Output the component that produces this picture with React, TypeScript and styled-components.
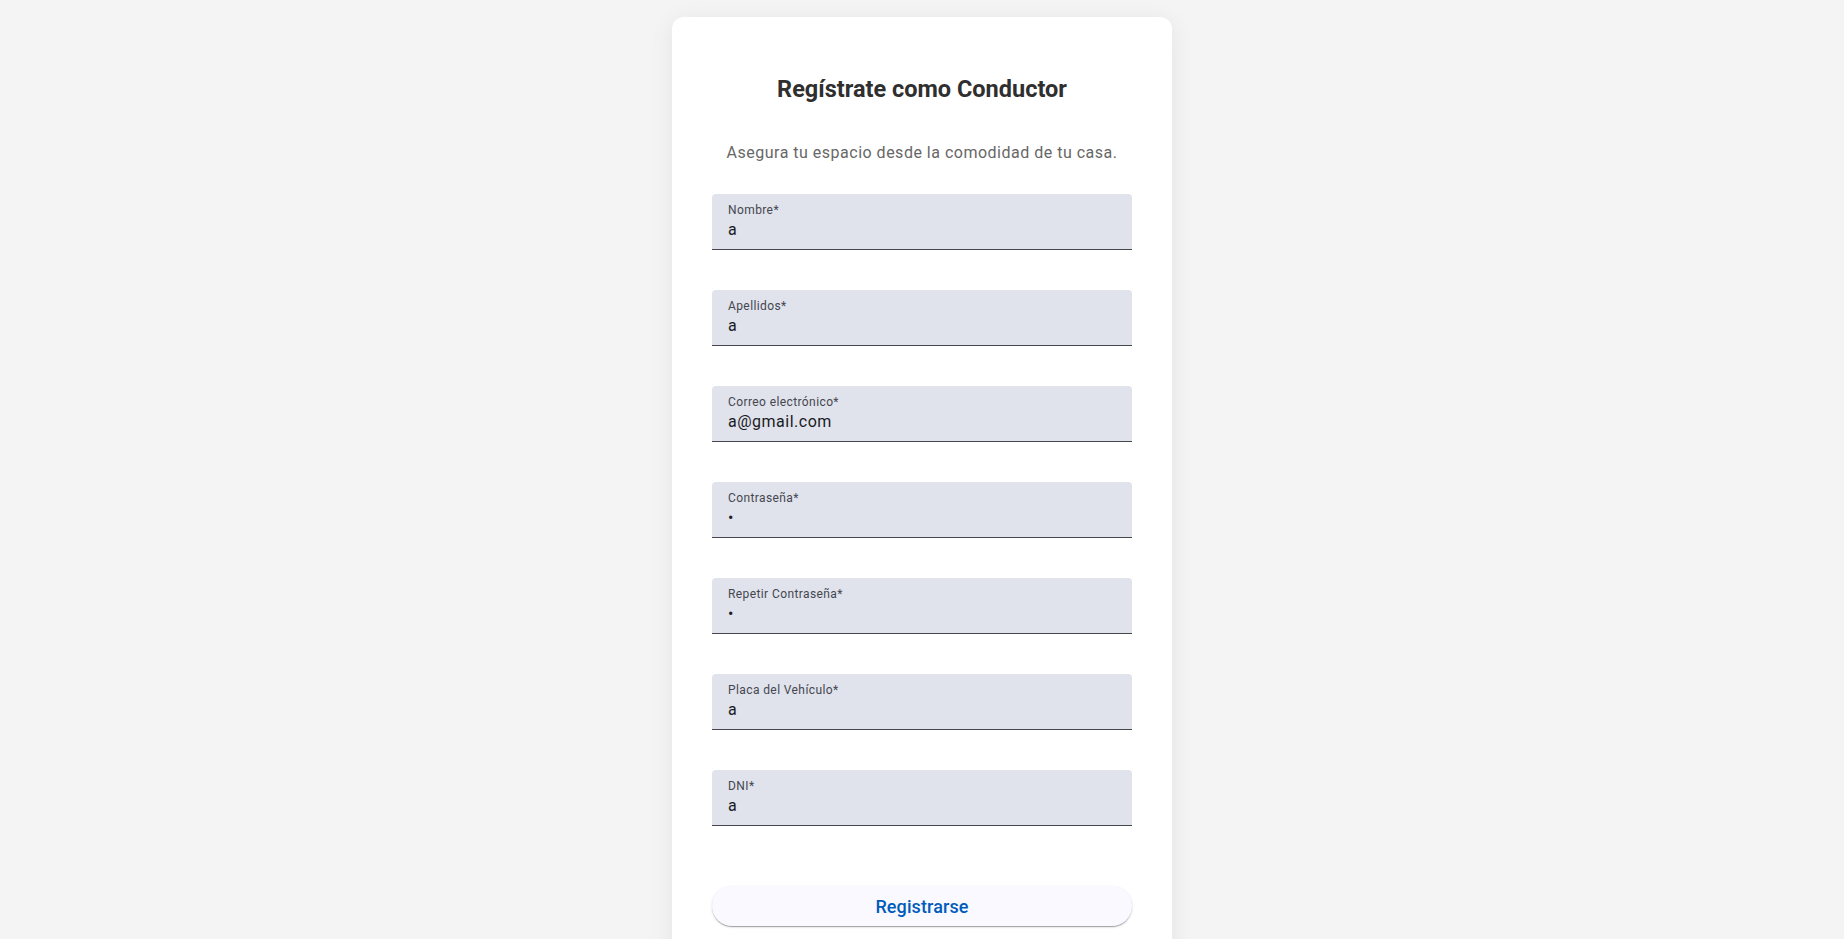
import React from "react";
import styled, { createGlobalStyle } from "styled-components";

const Global = createGlobalStyle`
  html, body {
    margin: 0;
    padding: 0;
    background: #f4f4f4;
    font-family: Roboto, "Noto Sans", sans-serif;
  }
  * { box-sizing: border-box; }
`;

const Page = styled.div`
  display: flex;
  justify-content: center;
  padding-top: 17px;
`;

const Card = styled.div`
  width: 500px;
  background: #ffffff;
  border-radius: 12px;
  box-shadow: 0 4px 24px rgba(0, 0, 0, 0.07);
  padding: 56px 40px 40px;
  display: flex;
  flex-direction: column;
  align-items: stretch;
  height: 960px;
`;

const Title = styled.h2`
  margin: 0;
  font-size: 23.5px;
  line-height: 32px;
  font-weight: 700;
  color: #2f2f2f;
  text-align: center;
`;

const Subtitle = styled.p`
  margin: 36px 0 0;
  font-size: 16px;
  line-height: 24px;
  letter-spacing: 0.5px;
  color: #676767;
  text-align: center;
`;

const Form = styled.form`
  display: flex;
  flex-direction: column;
  gap: 40px;
  margin-top: 29px;
`;

const Field = styled.label`
  display: flex;
  flex-direction: column;
  height: 56px;
  padding: 8px 16px 0;
  background: #e0e2ec;
  border-radius: 4px 4px 0 0;
  border-bottom: 1px solid #44474e;
`;

const Label = styled.span`
  font-size: 12px;
  line-height: 16px;
  letter-spacing: 0.4px;
  color: #44474e;
`;

const Input = styled.input`
  border: none;
  outline: none;
  background: transparent;
  padding: 0;
  margin: 0;
  height: 24px;
  font-family: Roboto, "Noto Sans", sans-serif;
  font-size: 16px;
  line-height: 24px;
  letter-spacing: 0.5px;
  color: #1a1b1f;
`;

const Button = styled.button`
  margin-top: 60px;
  height: 40px;
  width: 100%;
  border: none;
  border-radius: 20px;
  background: #f9f9ff;
  color: #005cbb;
  font-family: Roboto, "Noto Sans", sans-serif;
  font-size: 18px;
  font-weight: 500;
  letter-spacing: 0.1px;
  cursor: pointer;
  box-shadow: 0 2px 1px -1px rgba(0, 0, 0, 0.2), 0 1px 1px 0 rgba(0, 0, 0, 0.14),
    0 1px 3px 0 rgba(0, 0, 0, 0.12);
`;

const fields: { label: string; value: string; type?: string }[] = [
  { label: "Nombre*", value: "a" },
  { label: "Apellidos*", value: "a" },
  { label: "Correo electrónico*", value: "a@gmail.com" },
  { label: "Contraseña*", value: "a", type: "password" },
  { label: "Repetir Contraseña*", value: "a", type: "password" },
  { label: "Placa del Vehículo*", value: "a" },
  { label: "DNI*", value: "a" },
];

export default function App() {
  return (
    <>
      <Global />
      <Page>
        <Card>
          <Title>Regístrate como Conductor</Title>
          <Subtitle>Asegura tu espacio desde la comodidad de tu casa.</Subtitle>
          <Form onSubmit={(e) => e.preventDefault()}>
            {fields.map((f) => (
              <Field key={f.label}>
                <Label>{f.label}</Label>
                <Input type={f.type ?? "text"} value={f.value} readOnly />
              </Field>
            ))}
          </Form>
          <Button type="button">Registrarse</Button>
        </Card>
      </Page>
    </>
  );
}
